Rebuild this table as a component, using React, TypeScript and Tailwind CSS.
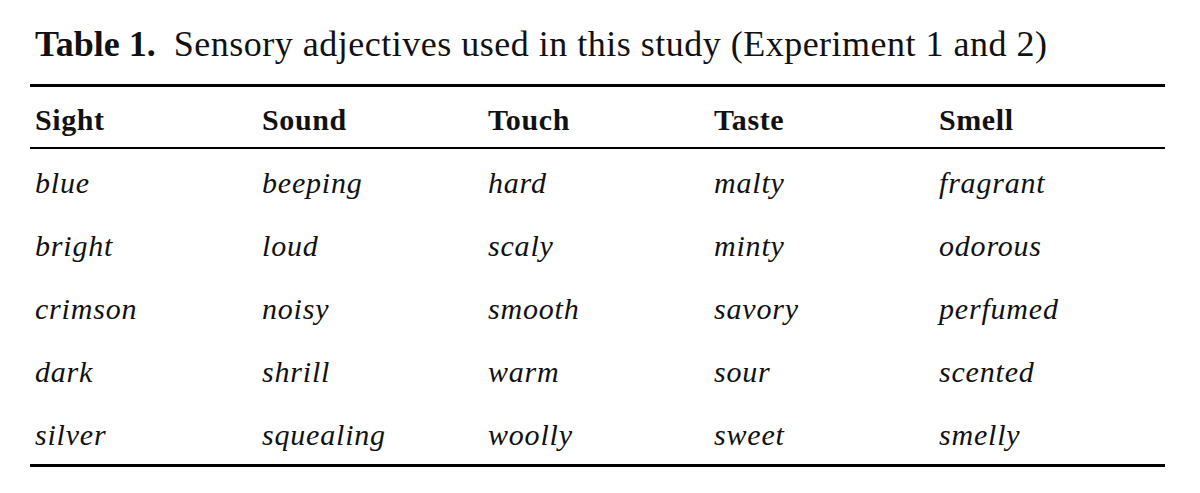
const columns = ['Sight', 'Sound', 'Touch', 'Taste', 'Smell']

const rows: string[][] = [
  ['blue', 'beeping', 'hard', 'malty', 'fragrant'],
  ['bright', 'loud', 'scaly', 'minty', 'odorous'],
  ['crimson', 'noisy', 'smooth', 'savory', 'perfumed'],
  ['dark', 'shrill', 'warm', 'sour', 'scented'],
  ['silver', 'squealing', 'woolly', 'sweet', 'smelly'],
]

const grid = 'grid grid-cols-[227px_226px_226px_225px_1fr] pl-[5px]'

export default function App() {
  return (
    <div className="w-[1200px] h-[493px] bg-white text-[#111] font-['Liberation_Serif','Times_New_Roman',serif]">
      {/* Caption */}
      <div className="pt-[22px] pl-[35px] text-[36px] leading-[44px] whitespace-nowrap">
        <span className="font-bold">Table 1.</span>
        <span className="ml-[18px] tracking-[0.5px]">Sensory adjectives used in this study (Experiment 1 and 2)</span>
      </div>

      <div className="mt-[18px] ml-[30px] w-[1135px] border-t-[3px] border-b-[3px] border-black">
        {/* Header */}
        <div className={`${grid} h-[62px] pt-[4px] border-b-2 border-black text-[30px] leading-[58px] font-bold tracking-[0.6px]`}>
          {columns.map((c) => (
            <div key={c}>{c}</div>
          ))}
        </div>

        {/* Body */}
        {rows.map((row, i) => (
          <div key={i} className={`${grid} h-[63px] pt-[4px] text-[30px] leading-[59px] italic tracking-[0.8px]`}>
            {row.map((w) => (
              <div key={w}>{w}</div>
            ))}
          </div>
        ))}
      </div>
    </div>
  )
}
